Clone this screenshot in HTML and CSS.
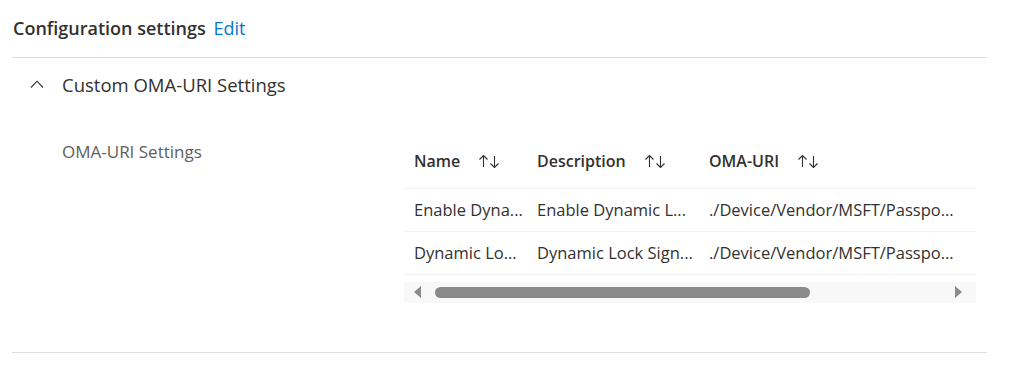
FILE: index.html
```html
<html>
  <head>
    <title>Configuration settings</title>
    <meta name="viewport" content="width=device-width, initial-scale=1">
    <link rel="stylesheet" href="styles.css">
  </head>
  <body>
    <div class="page">
      <div class="title">Configuration settings <a class="edit" href="#">Edit</a></div>
      <div class="section">
        <div class="section-head">
          <svg class="chevron" width="14" height="8" viewBox="0 0 14 8"><path d="M1 7.5 L7 1.2 L13 7.5" fill="none" stroke="#323130" stroke-width="1.1"/></svg>
          <span>Custom OMA-URI Settings</span>
        </div>
        <div class="field">
          <div class="label">OMA-URI Settings</div>
          <div class="grid">
            <table>
              <tr class="head">
                <th class="c1">Name <svg class="sort" width="24" height="15" viewBox="0 0 24 15"><path d="M5.5 13 V1.5 M1.5 5.5 L5.5 1.5 L9.5 5.5 M16.5 2 V13.5 M12.5 9.5 L16.5 13.5 L20.5 9.5" fill="none" stroke="#323130" stroke-width="1.1"/></svg></th>
                <th class="c2">Description <svg class="sort" width="24" height="15" viewBox="0 0 24 15"><path d="M5.5 13 V1.5 M1.5 5.5 L5.5 1.5 L9.5 5.5 M16.5 2 V13.5 M12.5 9.5 L16.5 13.5 L20.5 9.5" fill="none" stroke="#323130" stroke-width="1.1"/></svg></th>
                <th class="c3">OMA-URI <svg class="sort" width="24" height="15" viewBox="0 0 24 15"><path d="M5.5 13 V1.5 M1.5 5.5 L5.5 1.5 L9.5 5.5 M16.5 2 V13.5 M12.5 9.5 L16.5 13.5 L20.5 9.5" fill="none" stroke="#323130" stroke-width="1.1"/></svg></th>
              </tr>
              <tr>
                <td>Enable Dyna...</td>
                <td>Enable Dynamic L...</td>
                <td>./Device/Vendor/MSFT/Passpo...</td>
              </tr>
              <tr>
                <td>Dynamic Lo...</td>
                <td>Dynamic Lock Sign...</td>
                <td>./Device/Vendor/MSFT/Passpo...</td>
              </tr>
            </table>
            <div class="scrollbar">
              <span class="arrow-left"></span>
              <span class="thumb"></span>
              <span class="arrow-right"></span>
            </div>
          </div>
        </div>
      </div>
    </div>
  </body>
</html>
```

FILE: styles.css
```css
body { margin: 0; font-family: "Open Sans", "Noto Sans", Arial, sans-serif; color: #323130; background: #fff; }
.page { padding: 16px 37px 0 12px; }
.title { font-size: 18px; font-weight: 600; height: 25px; line-height: 25px; padding-left: 1px; border-bottom: 1px solid #e1dfdd; padding-bottom: 16px; }
.edit { color: #0078d4; font-weight: 400; text-decoration: none; margin-left: 3px; }
.section { border-bottom: 1px solid #e1dfdd; height: 294px; }
.section-head { display: flex; align-items: center; height: 52px; padding-left: 18px; font-size: 18.5px; }
.chevron { margin-right: 18px; }
.field { display: flex; }
.label { width: 342px; padding-left: 50px; font-size: 17px; line-height: 24px; color: #605e5c; padding-top: 30px; }
.grid { width: 572px; padding-top: 24px; }
table { border-collapse: collapse; width: 572px; table-layout: fixed; font-size: 16.5px; }
th { text-align: left; font-weight: 600; font-size: 16px; height: 54px; padding: 0 10px; border-bottom: 1px solid #f3f2f1; white-space: nowrap; }
td { height: 43px; padding: 0 10px; border-bottom: 1px solid #f3f2f1; white-space: nowrap; overflow: hidden; }
.c1 { width: 103px; }
.c2 { width: 152px; }
.sort { vertical-align: -2px; margin-left: 14px; }
.scrollbar { display: flex; align-items: center; height: 21px; margin-top: 7px; background: #f8f8f8; }
.arrow-left { width: 0; height: 0; border-top: 6px solid transparent; border-bottom: 6px solid transparent; border-right: 7px solid #8a8a8a; margin-left: 10px; }
.thumb { height: 11px; width: 375px; background: #8a8a8a; border-radius: 6px; margin-left: 14px; }
.arrow-right { width: 0; height: 0; border-top: 6px solid transparent; border-bottom: 6px solid transparent; border-left: 7px solid #8a8a8a; margin-left: auto; margin-right: 14px; }
```
